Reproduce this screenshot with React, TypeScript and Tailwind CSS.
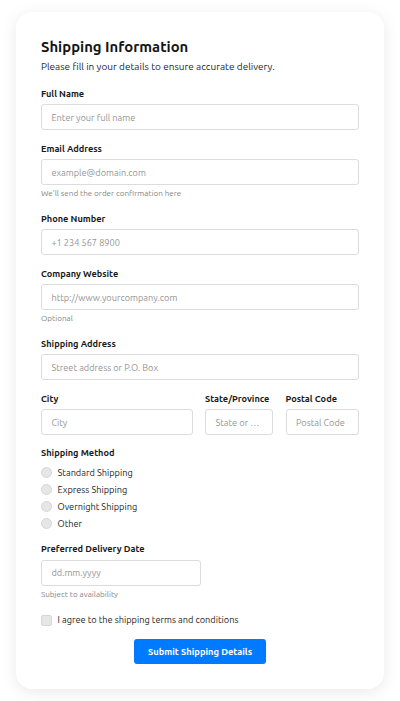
import React from "react";

const font = { fontFamily: "Ubuntu, 'Open Sans', sans-serif" };

function Label({ children }: { children: React.ReactNode }) {
  return (
    <label className="block text-[9.2px] leading-[13.44px] font-bold text-[#1a1a1a] mb-[4px]">
      {children}
    </label>
  );
}

function Input({ placeholder, className = "" }: { placeholder: string; className?: string }) {
  return (
    <input
      placeholder={placeholder}
      className={`block h-[25.6px] w-full rounded-[3px] border border-[#dcdcdc] bg-white px-[9.4px] text-[9.2px] text-[#222] placeholder:text-[#959595] outline-none ${className}`}
    />
  );
}

function Help({ children }: { children: React.ReactNode }) {
  return <p className="mt-[3.5px] text-[8.1px] leading-[11.52px] text-[#858585]">{children}</p>;
}

export default function App() {
  return (
    <div className="min-h-[701px] w-[400px] bg-white pt-[12px] px-[16px]" style={font}>
      <div className="w-[368px] rounded-[16px] bg-white px-[25px] pt-[24.8px] pb-[24.7px] shadow-[0_3px_16px_rgba(0,0,0,0.09)]">
        <h1 className="text-[14.85px] leading-[20.48px] font-bold text-[#141414] mb-[2.2px]">
          Shipping Information
        </h1>
        <p className="text-[10px] leading-[15.36px] text-[#1f1f1f] mb-[12px]">
          Please fill in your details to ensure accurate delivery.
        </p>

        <div className="mb-[12px]">
          <Label>Full Name</Label>
          <Input placeholder="Enter your full name" />
        </div>

        <div className="mb-[12px]">
          <Label>Email Address</Label>
          <Input placeholder="example@domain.com" />
          <Help>We'll send the order confirmation here</Help>
        </div>

        <div className="mb-[12px]">
          <Label>Phone Number</Label>
          <Input placeholder="+1 234 567 8900" />
        </div>

        <div className="mb-[12px]">
          <Label>Company Website</Label>
          <Input placeholder="http://www.yourcompany.com" />
          <Help>Optional</Help>
        </div>

        <div className="mb-[12px]">
          <Label>Shipping Address</Label>
          <Input placeholder="Street address or P.O. Box" />
        </div>

        <div className="mb-[11.2px] flex gap-[12.5px]">
          <div className="flex-1">
            <Label>City</Label>
            <Input placeholder="City" />
          </div>
          <div className="w-[68px]">
            <Label>State/Province</Label>
            <Input placeholder="State or …" />
          </div>
          <div className="w-[73.5px]">
            <Label>Postal Code</Label>
            <Input placeholder="Postal Code" />
          </div>
        </div>

        <div className="mb-[12px]">
          <Label>Shipping Method</Label>
          <div className="mt-[6.1px] flex flex-col gap-[3.66px]">
            {["Standard Shipping", "Express Shipping", "Overnight Shipping", "Other"].map((o) => (
              <label key={o} className="flex items-center gap-[5.5px] text-[9.2px] leading-[13.44px] text-[#262626]">
                <span className="inline-block h-[11px] w-[11px] rounded-full border border-[#d6d6d6] bg-[#e6e6e6]" />
                {o}
              </label>
            ))}
          </div>
        </div>

        <div className="mb-[11.8px]">
          <Label>Preferred Delivery Date</Label>
          <Input placeholder="dd.mm.yyyy" className="mt-[1.9px] !w-[159.5px]" />
          <Help>Subject to availability</Help>
        </div>

        <label className="mb-[11.6px] flex items-center gap-[5.5px] text-[9.2px] leading-[15.36px] text-[#262626]">
          <span className="inline-block h-[11px] w-[11px] rounded-[2px] border border-[#d6d6d6] bg-[#e6e6e6]" />
          I agree to the shipping terms and conditions
        </label>

        <div className="flex justify-center">
          <button className="h-[25px] w-[132.7px] rounded-[3px] bg-[#007bff] text-[9.3px] font-bold text-white">
            Submit Shipping Details
          </button>
        </div>
      </div>
    </div>
  );
}
